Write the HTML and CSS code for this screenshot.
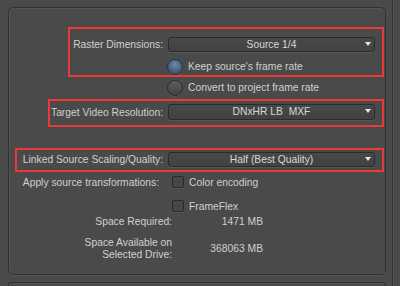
FILE: index.html
```html
<!DOCTYPE html>
<html lang="en">
<head>
  <meta charset="UTF-8">
  <title>Export Settings</title>
  <link rel="stylesheet" href="styles.css">
</head>
<body>
  <div class="window">
    <div class="content">
      <section class="panel">
        <div class="row raster-row">
          <label class="label">Raster Dimensions:</label>
          <div class="select">Source 1/4<span class="arrow"></span></div>
        </div>

        <div class="radio-row first">
          <span class="radio checked"></span>
          <span class="opt">Keep source's frame rate</span>
        </div>
        <div class="radio-row">
          <span class="radio"></span>
          <span class="opt">Convert to project frame rate</span>
        </div>

        <div class="row target-row">
          <label class="label">Target Video Resolution:</label>
          <div class="select tall">DNxHR LB&nbsp; MXF<span class="arrow"></span></div>
        </div>

        <div class="row linked-row">
          <label class="label">Linked Source Scaling/Quality:</label>
          <div class="select">Half (Best Quality)<span class="arrow"></span></div>
        </div>

        <div class="check-row apply-row">
          <label class="label short">Apply source transformations:</label>
          <span class="checkbox"></span>
          <span class="opt">Color encoding</span>
        </div>
        <div class="check-row flex-row">
          <span class="checkbox"></span>
          <span class="opt">FrameFlex</span>
        </div>

        <div class="space-row">
          <span class="space-label">Space Required:</span>
          <span class="space-value">1471 MB</span>
        </div>
        <div class="space-row avail-row">
          <span class="space-label">Space Available on<br>Selected Drive:</span>
          <span class="space-value">368063 MB</span>
        </div>

        <!-- annotation boxes -->
        <div class="mark mark-raster"></div>
        <div class="mark mark-target"></div>
        <div class="mark mark-linked"></div>
      </section>

      <section class="panel panel-next"></section>
    </div>
    <div class="edge"></div>
  </div>
</body>
</html>
```

FILE: styles.css
```css
body {
    margin: 0;
    background: #4a4a4a;
    font-family: 'Liberation Sans', Arial, sans-serif;
    font-size: 10.3px;
    color: #d0d0d0;
    overflow: hidden;
}

.window {
    display: flex;
    height: 286px;
    overflow: hidden;
}

.content {
    width: 392px;
}

.edge {
    flex: 1;
    border-left: 1px solid #333;
    box-shadow: inset 1px 0 0 #565656;
}

.panel {
    position: relative;
    box-sizing: border-box;
    width: 378px;
    height: 268px;
    margin: 7px 0 0 8px;
    border: 1px solid #313131;
    border-radius: 5px;
    box-shadow: inset 1px 1px 0 #555, 0 1px 0 #565656;
}

/* only the top edge of the next panel shows */
.panel-next {
    height: 4px;
    margin-top: 7px;
    border-bottom: 0;
    border-radius: 5px 5px 0 0;
    box-shadow: inset 1px 1px 0 #555;
}

.row {
    display: flex;
    align-items: center;
}

.label {
    width: 154px;
    margin-right: 5px;
    text-align: right;
    white-space: nowrap;
}

.select {
    position: relative;
    box-sizing: border-box;
    width: 207px;
    height: 15px;
    line-height: 13px;
    text-align: center;
    background: linear-gradient(#484848, #424242);
    border: 1px solid #2b2b2b;
    border-radius: 3px;
    box-shadow: 0 1px 0 #575757;
    color: #d8d8d8;
}

.select.tall {
    height: 16px;
    line-height: 14px;
}

.arrow {
    position: absolute;
    right: 3px;
    top: 4px;
    width: 0;
    height: 0;
    border-left: 3.5px solid transparent;
    border-right: 3.5px solid transparent;
    border-top: 4px solid #e6e6e6;
}

.raster-row { margin-top: 29px; }
.target-row { margin-top: 6px; }
.linked-row { margin-top: 32px; }

.radio-row {
    display: flex;
    align-items: center;
    height: 21px;
    padding-left: 158px;
}

.radio-row.first { margin-top: 4px; }

.radio {
    box-sizing: border-box;
    width: 16px;
    height: 16px;
    margin-right: 5px;
    border-radius: 50%;
    border: 1px solid #2c2c2c;
    background: linear-gradient(#5e5e5e, #424242);
    box-shadow: 0 1px 0 #575757;
}

.radio.checked {
    border-color: #26354a;
    background: radial-gradient(circle at 50% 35%, #7189a8, #4a6182 55%, #33465f);
}

.check-row {
    display: flex;
    align-items: center;
    height: 16px;
}

.label.short {
    width: 150px;
    margin-right: 13px;
}

.apply-row { margin-top: 7px; }

.flex-row {
    margin-top: 8px;
    padding-left: 163px;
}

.checkbox {
    box-sizing: border-box;
    width: 12px;
    height: 12px;
    margin-right: 5px;
    border: 1px solid #2a2a2a;
    border-radius: 2px;
    background: #464646;
    box-shadow: 0 1px 0 #575757;
}

.space-row {
    display: flex;
    align-items: center;
    height: 14px;
}

.space-label {
    width: 163px;
    text-align: right;
}

.space-value {
    width: 91px;
    text-align: right;
}

.avail-row {
    margin-top: 9px;
    height: 24px;
    line-height: 12px;
}

.mark {
    position: absolute;
    box-sizing: border-box;
    border: 2px solid #e8393b;
}

.mark-raster { left: 59px; top: 19px; width: 316px; height: 50px; }
.mark-target { left: 39px; top: 91px; width: 336px; height: 28px; }
.mark-linked { left: 6px; top: 140px; width: 369px; height: 24px; }
```
